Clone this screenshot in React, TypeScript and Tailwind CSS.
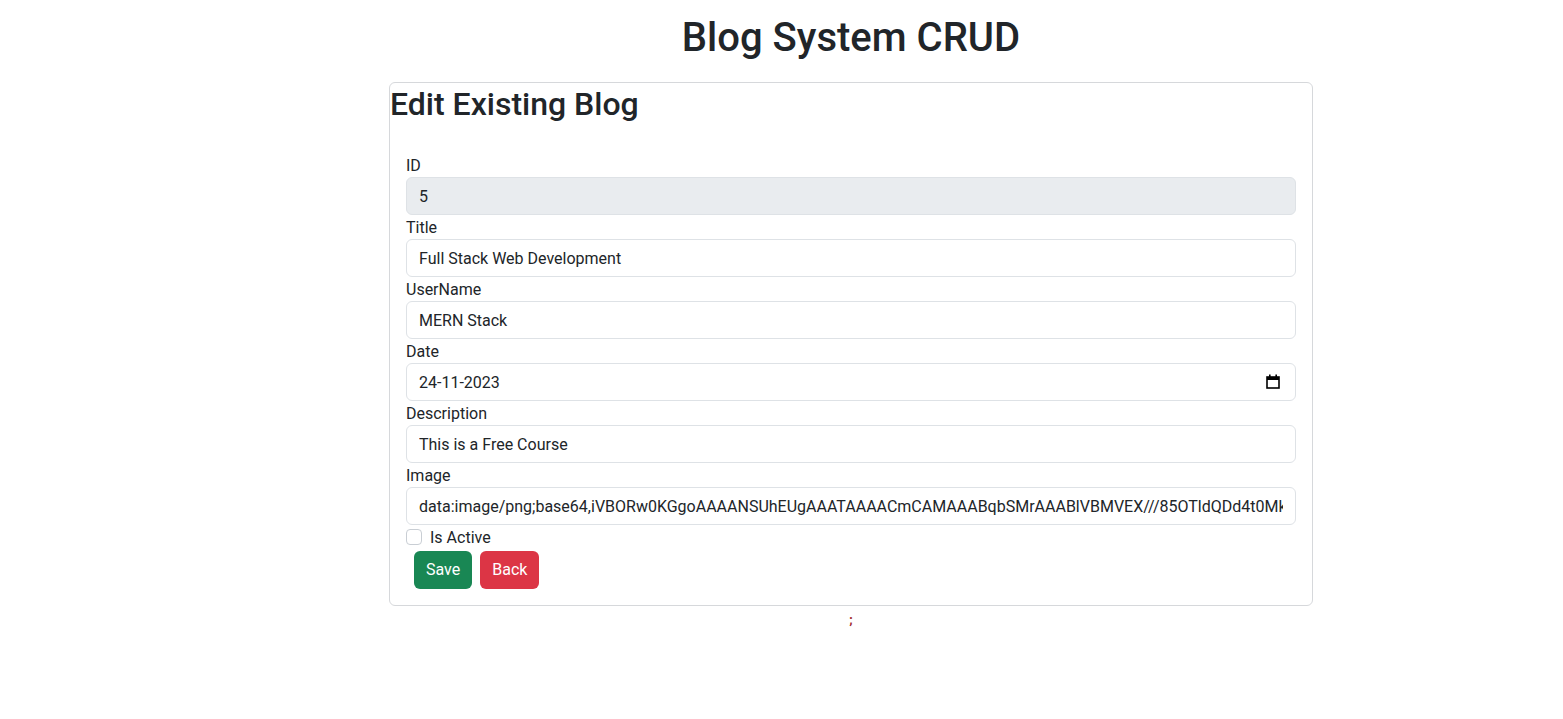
import { useState } from 'react'

const font = { fontFamily: 'Roboto, "Noto Sans", sans-serif' }

const imageData =
  'data:image/png;base64,iVBORw0KGgoAAAANSUhEUgAAATAAAACmCAMAAABqbSMrAAABlVBMVEX///85OTldQDd4t0MkYmZ2Ya0bQ1Z3NjQwLzJ8Rk5iYy9GdGhvc3RTdWRlbnRzTm90'

function Field({ label, children }: { label: string; children: React.ReactNode }) {
  return (
    <div className="flex flex-col">
      <label className="h-6 pt-px text-base leading-6 text-[#212529]">{label}</label>
      {children}
    </div>
  )
}

const inputBase =
  'h-[38px] w-full rounded-md border border-[#dee2e6] px-3 text-base text-[#212529] outline-none'
const inputCls = inputBase + ' bg-white'

export default function App() {
  const [active, setActive] = useState(false)

  return (
    <div className="min-h-screen bg-white pl-[139px]" style={font}>
      <div className="mx-auto w-[924px] pt-[14px]">
        <h1 className="mb-[20px] text-center text-[40px] font-medium leading-[48px] text-[#212529]">
          Blog System CRUD
        </h1>

        <div className="rounded-md border border-[#d6d8db] bg-white">
          <h2 className="mb-2 pt-0.5 text-[32px] font-medium leading-[38px] text-[#212529]">Edit Existing Blog</h2>

          <form className="flex flex-col px-4 pb-4 pt-[22px]">
            <Field label="ID">
              <input className={inputBase + ' bg-[#e9ecef]'} value="5" disabled readOnly />
            </Field>
            <Field label="Title">
              <input className={inputCls} defaultValue="Full Stack Web Development" />
            </Field>
            <Field label="UserName">
              <input className={inputCls} defaultValue="MERN Stack" />
            </Field>
            <Field label="Date">
              <div className="relative">
                <input className={inputCls} defaultValue="24-11-2023" />
                <svg
                  className="absolute right-[16px] top-[11px]"
                  width="14"
                  height="15"
                  viewBox="0 0 14 15"
                  fill="none"
                >
                  <rect x="1" y="3" width="12" height="11" stroke="#000" strokeWidth="1.6" />
                  <rect x="1" y="3" width="12" height="3" fill="#000" />
                  <rect x="3" y="0.5" width="1.6" height="3" fill="#000" />
                  <rect x="9.4" y="0.5" width="1.6" height="3" fill="#000" />
                </svg>
              </div>
            </Field>
            <Field label="Description">
              <input className={inputCls} defaultValue="This is a Free Course" />
            </Field>
            <Field label="Image">
              <input className={inputCls} defaultValue={imageData} />
            </Field>

            <div className="flex h-6 items-center gap-2">
              <input
                type="checkbox"
                checked={active}
                onChange={() => setActive(!active)}
                className="h-4 w-4 appearance-none rounded border border-[#c9ced4] bg-white"
              />
              <span className="pt-px text-base text-[#212529]">Is Active</span>
            </div>

            <div className="ml-2 mt-0.5 flex gap-2">
              <button
                type="button"
                className="h-[38px] rounded-md bg-[#198754] px-3 text-base text-white"
              >
                Save
              </button>
              <button
                type="button"
                className="h-[38px] rounded-md bg-[#dc3545] px-3 text-base text-white"
              >
                Back
              </button>
            </div>
          </form>
        </div>

        <p className="mt-1 text-center text-[13px] font-bold leading-5 text-[#a0282a]">;</p>
      </div>
    </div>
  )
}
